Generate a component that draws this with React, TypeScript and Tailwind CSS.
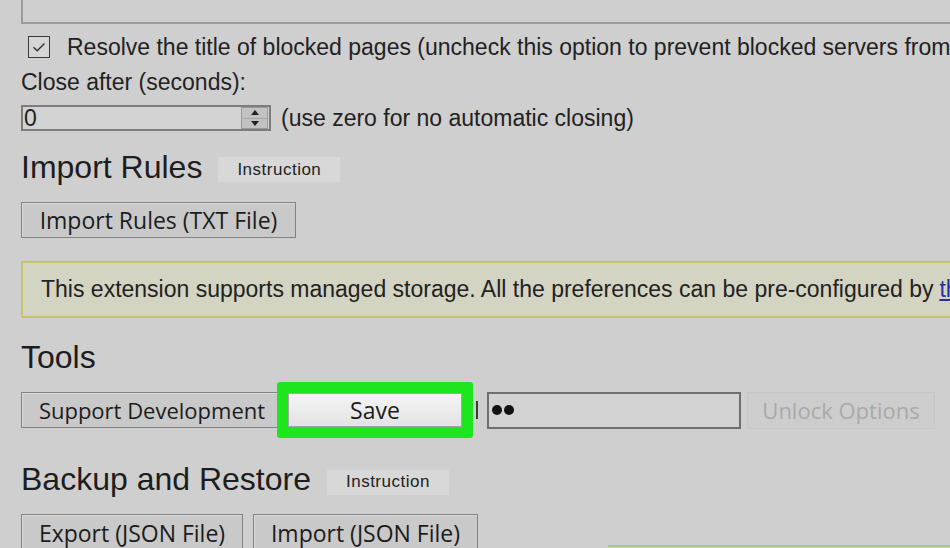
import clsx from 'clsx'
import { twMerge } from 'tailwind-merge'
import type { ReactNode } from 'react'

const btnFont = "font-['Open_Sans','Noto_Sans',sans-serif]"

function Button({ children, className }: { children: ReactNode; className?: string }) {
  return (
    <button
      className={twMerge(
        'flex shrink-0 items-center justify-center border border-[#828282] bg-[#c9c9c9] text-[23px] leading-none text-[#1c1c1c] shadow-[inset_1px_1px_0_#d9d9d9]',
        btnFont,
        className,
      )}
    >
      {children}
    </button>
  )
}

function Instruction() {
  return (
    <span className="flex h-[25px] items-center bg-[#d8d8d8] px-[19px] text-[17px] tracking-[0.5px] text-[#222]">
      Instruction
    </span>
  )
}

function Heading({ children }: { children: ReactNode }) {
  return <h2 className="m-0 text-[32px] leading-none font-normal text-[#1d1d1d]">{children}</h2>
}

export default function App() {
  return (
    <div className="h-[548px] w-[950px] overflow-hidden bg-[#cfcfcf] pl-[21px] font-['Liberation_Sans',Arial,sans-serif] text-[23px] text-[#222]">
      {/* end of the rules textarea above */}
      <div className="-mr-[10px] h-[24px] border-b-2 border-l-2 border-[#9b9b9b]" />

      <div className="mt-[8px] flex h-[30px] items-center whitespace-nowrap">
        <span className="ml-[7px] flex size-[22px] shrink-0 items-center justify-center border-[1.5px] border-[#3a3a3a] bg-[#d6d6d6]">
          <svg viewBox="0 0 16 16" className="size-[16px]" fill="none" stroke="#333" strokeWidth="1.4">
            <path d="M2.5 8.2 6.2 11.8 13.5 4.5" />
          </svg>
        </span>
        <span className="ml-[17px]">
          Resolve the title of blocked pages (uncheck this option to prevent blocked servers from
        </span>
      </div>

      <div className="mt-[7px] flex h-[26px] items-center">Close after (seconds):</div>

      <div className="mt-[10px] flex h-[26px] items-center">
        <div className="flex h-full w-[250px] items-center border-2 border-[#7c7c7c] bg-[#d3d3d3]">
          <span className="flex-1 pl-[1px]">0</span>
          <div className="mr-[1px] flex h-[22px] w-[27px] flex-col border border-[#9a9a9a] bg-[#c2c2c2]">
            <span className="flex flex-1 items-center justify-center border-b border-[#a6a6a6]">
              <svg viewBox="0 0 8 5" className="h-[5px] w-[8px]">
                <path d="M0 5 4 0 8 5Z" fill="#222" />
              </svg>
            </span>
            <span className="flex flex-1 items-center justify-center">
              <svg viewBox="0 0 8 5" className="h-[5px] w-[8px]">
                <path d="M0 0 4 5 8 0Z" fill="#222" />
              </svg>
            </span>
          </div>
        </div>
        <span className="ml-[10px]">(use zero for no automatic closing)</span>
      </div>

      <div className="mt-[20px] flex h-[32px] items-center gap-[16px]">
        <Heading>Import Rules</Heading>
        <span className="mt-[5px]">
          <Instruction />
        </span>
      </div>

      <Button className="mt-[19px] h-[36px] w-[275px]">Import Rules (TXT File)</Button>

      <div className="mt-[23px] -mr-[10px] flex h-[57px] items-center overflow-hidden whitespace-nowrap border-2 border-[#c4c46a] bg-[#d4d4c3] pl-[18px]">
        This extension supports managed storage. All the preferences can be pre-configured by{' '}
        <a className="ml-[6px] text-[#2b2ba6] underline">th</a>
      </div>

      <div className="mt-[23px] flex h-[32px] items-center">
        <Heading>Tools</Heading>
      </div>

      <div className="mt-[9px] flex h-[56px] items-center">
        <Button className="h-[36px] w-[262px] text-[22px]">Support Development</Button>
        <div className="-ml-[6px] flex h-[56px] w-[196px] shrink-0 items-stretch rounded-[3px] border-[11px] border-[#1fe51f] bg-[#1fe51f]">
          <button
            className={clsx(
              'flex flex-1 items-center justify-center border border-[#a5a5a5] bg-gradient-to-b from-[#f4f4f4] to-[#e3e3e3] text-[23px] text-[#1c1c1c]',
              btnFont,
            )}
          >
            Save
          </button>
        </div>
        <span className="ml-[3px] h-[18px] w-[2px] bg-[#3b3b3b]" />
        <div className="ml-[9px] flex h-[37px] w-[254px] items-center gap-[2px] border-2 border-[#6f6f6f] bg-[#d2d2d2] pl-[3px]">
          <span className="size-[10px] rounded-full bg-[#111]" />
          <span className="size-[10px] rounded-full bg-[#111]" />
        </div>
        <Button className="ml-[6px] h-[37px] w-[188px] border-[#c6c6c6] bg-[#cdcdcd] text-[22px] text-[#a9a9a9] shadow-none">
          Unlock Options
        </Button>
      </div>

      <div className="mt-[25px] flex h-[32px] items-center gap-[16px]">
        <Heading>Backup and Restore</Heading>
        <span className="mt-[6px]">
          <Instruction />
        </span>
      </div>

      <div className="mt-[19px] flex items-start">
        <Button className="h-[38px] w-[222px]">Export (JSON File)</Button>
        <Button className="ml-[10px] h-[38px] w-[225px]">Import (JSON File)</Button>
        <span className="ml-auto mt-[31px] h-[2px] w-[342px] bg-[#a8c98e]" />
      </div>
    </div>
  )
}
